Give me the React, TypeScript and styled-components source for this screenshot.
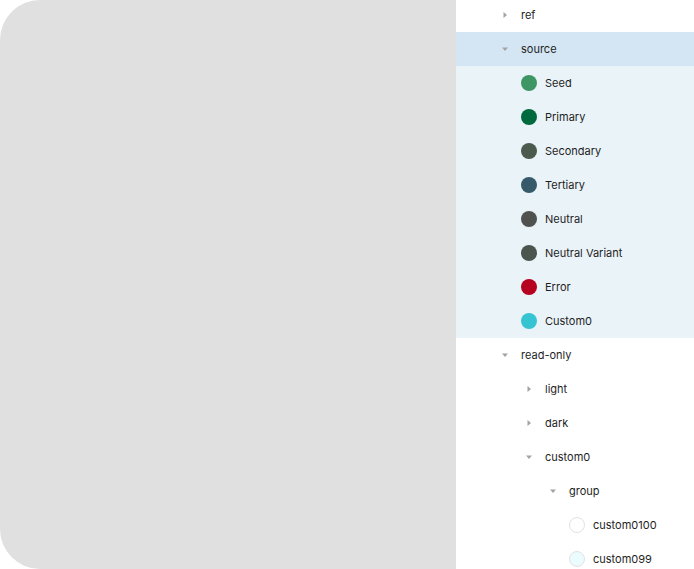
import styled, { createGlobalStyle } from 'styled-components';

const GlobalStyle = createGlobalStyle`
  html, body {
    margin: 0;
    padding: 0;
    background: #ffffff;
    overflow: hidden;
  }
  body {
    font-family: Inter, 'Noto Sans', sans-serif;
  }
`;

type Node = {
  label: string;
  depth: number;
  toggle?: 'open' | 'closed';
  swatch?: string;
  outlined?: boolean;
  tone?: 'selected' | 'child';
};

const nodes: Node[] = [
  { label: 'ref', depth: 1, toggle: 'closed' },
  { label: 'source', depth: 1, toggle: 'open', tone: 'selected' },
  { label: 'Seed', depth: 2, swatch: '#3f9665', tone: 'child' },
  { label: 'Primary', depth: 2, swatch: '#006a3e', tone: 'child' },
  { label: 'Secondary', depth: 2, swatch: '#4a5a4c', tone: 'child' },
  { label: 'Tertiary', depth: 2, swatch: '#365a6a', tone: 'child' },
  { label: 'Neutral', depth: 2, swatch: '#50524f', tone: 'child' },
  { label: 'Neutral Variant', depth: 2, swatch: '#4b554d', tone: 'child' },
  { label: 'Error', depth: 2, swatch: '#b5001f', tone: 'child' },
  { label: 'Custom0', depth: 2, swatch: '#36c4d2', tone: 'child' },
  { label: 'read-only', depth: 1, toggle: 'open' },
  { label: 'light', depth: 2, toggle: 'closed' },
  { label: 'dark', depth: 2, toggle: 'closed' },
  { label: 'custom0', depth: 2, toggle: 'open' },
  { label: 'group', depth: 3, toggle: 'open' },
  { label: 'custom0100', depth: 4, swatch: '#ffffff', outlined: true },
  { label: 'custom099', depth: 4, swatch: '#eafcfd', outlined: true },
];

// small grey triangle used for expandable rows
function Caret({ open }: { open: boolean }) {
  return (
    <svg width="6" height="6" viewBox="0 0 6 6">
      {open ? <path d="M0 1.5 L6 1.5 L3 5 Z" fill="#a3a3a3" /> : <path d="M1.5 0 L5 3 L1.5 6 Z" fill="#a3a3a3" />}
    </svg>
  );
}

export default function App() {
  return (
    <Page>
      <GlobalStyle />
      <Canvas />
      <Tree>
        {nodes.map((n) => (
          <Row key={n.label} $depth={n.depth} $tone={n.tone}>
            <Slot>
              {n.swatch ? (
                <Swatch $color={n.swatch} $outlined={n.outlined} />
              ) : n.toggle ? (
                <Caret open={n.toggle === 'open'} />
              ) : null}
            </Slot>
            <Label>{n.label}</Label>
          </Row>
        ))}
      </Tree>
    </Page>
  );
}

const Page = styled.div`
  display: flex;
  width: 694px;
  height: 569px;
  overflow: hidden;
`;

const Canvas = styled.div`
  flex: 0 0 456px;
  height: 569px;
  background: #e0e0e0;
  border-radius: 40px 0 0 40px;
`;

const Tree = styled.div`
  flex: 1;
  display: flex;
  flex-direction: column;
  margin-top: -2px;
`;

const Row = styled.div<{ $depth: number; $tone?: 'selected' | 'child' }>`
  display: flex;
  align-items: center;
  gap: 8px;
  flex: 0 0 34px;
  padding-left: ${(p) => 41 + (p.$depth - 1) * 24}px;
  background: ${(p) => (p.$tone === 'selected' ? '#d4e6f4' : p.$tone === 'child' ? '#eaf3f8' : 'transparent')};
`;

const Slot = styled.div`
  width: 16px;
  height: 16px;
  display: flex;
  align-items: center;
  justify-content: center;
`;

const Swatch = styled.div<{ $color: string; $outlined?: boolean }>`
  width: 16px;
  height: 16px;
  border-radius: 50%;
  box-sizing: border-box;
  background: ${(p) => p.$color};
  border: ${(p) => (p.$outlined ? '1px solid #e2e2e2' : 'none')};
`;

const Label = styled.span`
  font-size: 11px;
  color: #1e1e1e;
  white-space: nowrap;
`;
